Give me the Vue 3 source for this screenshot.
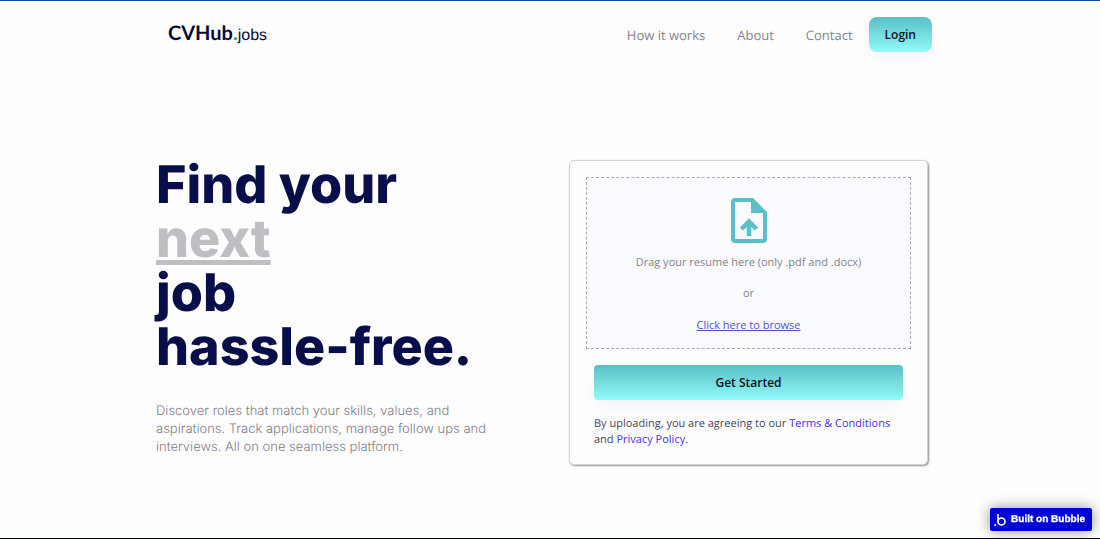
<script setup>
import { ref } from 'vue'

const navLinks = ['How it works', 'About', 'Contact']
const picker = ref(null)
</script>

<template>
  <div class="page">
    <header class="header">
      <a class="logo" href="#"><span class="logo-name">CVHub</span><span class="logo-dot">.</span><span class="logo-tld">jobs</span></a>
      <nav class="nav">
        <a v-for="link in navLinks" :key="link" class="nav-link" href="#">{{ link }}</a>
        <button class="button login" type="button">Login</button>
      </nav>
    </header>

    <main class="hero">
      <section class="intro">
        <h1 class="title">
          <span class="line">Find your</span>
          <span class="line accent">next</span>
          <span class="line">job</span>
          <span class="line">hassle-free.</span>
        </h1>
        <p class="lead">Discover roles that match your skills, values, and aspirations. Track applications, manage follow ups and interviews. All on one seamless platform.</p>
      </section>

      <section class="card">
        <div class="dropzone">
          <svg class="file-icon" viewBox="0 0 38 46" aria-hidden="true">
            <path fill="#5bbfc6" fill-rule="evenodd" d="M5 0H23L37 14V41Q37 45 33 45H5Q1 45 1 41V4Q1 0 5 0ZM5 4V41H33V15H21V4Z" />
            <path fill="none" stroke="#5bbfc6" stroke-width="4.500" d="M19 38V23M11.500 31L19 23.500L26.500 31" />
          </svg>
          <p class="drop-text">Drag your resume here (only .pdf and .docx)</p>
          <p class="drop-text">or</p>
          <button class="browse" type="button" @click="picker.click()">Click here to browse</button>
          <input ref="picker" type="file" accept=".pdf,.docx" aria-label="Resume" hidden />
        </div>
        <button class="button start" type="button">Get Started</button>
        <p class="terms">By uploading, you are agreeing to our <a href="#">Terms &amp; Conditions</a> and <a href="#">Privacy Policy</a>.</p>
      </section>
    </main>

    <a class="badge" href="#">
      <svg class="badge-icon" viewBox="0 0 12 14" aria-hidden="true">
        <path fill="none" stroke="#fff" stroke-width="1.600" d="M4 1V9" />
        <circle cx="7.500" cy="8.500" r="3.500" fill="none" stroke="#fff" stroke-width="1.600" />
        <circle cx="1.200" cy="12" r="1" fill="#fff" />
      </svg>
      Built on Bubble
    </a>
  </div>
</template>

<style>
body {
  background: #fefefe;
}
</style>

<style scoped>
.page {
  box-sizing: border-box;
  min-height: 100vh;
  padding: 0 16px;
  border-top: 1px solid #07529a;
  border-bottom: 1px solid #050524;
  font-family: "Open Sans", sans-serif;
  text-rendering: geometricPrecision;
}
a {
  text-decoration: none;
}
.header {
  display: flex;
  align-items: center;
  justify-content: space-between;
  box-sizing: border-box;
  max-width: 788px;
  margin: 0 auto;
  padding: 16px 12px;
}
.logo {
  display: flex;
  align-items: baseline;
  color: #07083a;
  line-height: 24px;
}
.logo-name {
  font: 700 20px/24px Lato, sans-serif;
}
.logo-dot {
  color: #259a9a;
  font: 700 20px/24px Lato, sans-serif;
}
.logo-tld {
  font: 400 16px/24px "Liberation Sans", sans-serif;
}
.nav {
  display: flex;
  align-items: center;
  gap: 32px;
}
.nav-link {
  color: #85838b;
  font-size: 13px;
  line-height: 20px;
}
.button {
  border: 0;
  background: linear-gradient(#5bbfc6, #91fafa);
  box-shadow: 0 8px 16px rgba(120, 80, 220, 0.06);
  color: #091520;
  font: 600 12px/19px "Open Sans", sans-serif;
  cursor: pointer;
}
.login {
  margin-left: -16px;
  padding: 8px 16px;
  border-radius: 8px;
}
.hero {
  display: grid;
  grid-template-columns: 1fr 359px;
  box-sizing: border-box;
  max-width: 788px;
  margin: 0 auto;
  padding: 92px 16px 72px 0;
}
.title {
  margin: -2px 0 0;
  color: #070e4a;
  font: 800 52px/54px Inter, sans-serif;
}
.line {
  display: block;
  width: fit-content;
}
.accent {
  color: #c0bec2;
  text-decoration: underline;
  text-decoration-thickness: 5px;
  text-underline-offset: 3px;
}
.lead {
  max-width: 336px;
  margin: 28px 0 0;
  color: #85808a;
  font: 300 13px/18px Inter, sans-serif;
}
.card {
  display: flex;
  flex-direction: column;
  align-self: start;
  padding: 16px;
  border: 1px solid #d2d1d4;
  border-radius: 5px;
  background: #fefefe;
  box-shadow: 1px 1px 2px #918e96;
}
.dropzone {
  display: flex;
  flex-direction: column;
  align-items: center;
  gap: 15px;
  padding: 20px 16px 15px;
  border: 1px dashed #a8abb8;
  background: #fafbff;
}
.file-icon {
  width: 38px;
  height: 46px;
  margin-bottom: -4px;
}
.drop-text {
  margin: 0;
  color: #85838b;
  font-size: 11px;
  line-height: 16px;
}
.browse {
  padding: 0;
  border: 0;
  background: none;
  color: #5052d8;
  font: 400 11px/16px "Open Sans", sans-serif;
  text-decoration: underline;
  cursor: pointer;
}
.start {
  margin: 16px 8px 0;
  padding: 8px;
  border-radius: 4px;
}
.terms {
  margin: 16px 8px 0;
  color: #48455f;
  font-size: 11px;
  line-height: 16px;
}
.terms a {
  color: #4a2bea;
}
.badge {
  position: fixed;
  right: 8px;
  bottom: 8px;
  display: flex;
  align-items: center;
  gap: 5px;
  padding: 4px 7px 4px 4px;
  border-radius: 2px;
  background: #0205d3;
  box-shadow: 0 0 14px rgba(0, 0, 0, 0.45);
  color: #fff;
  font: 700 10px/15px "Liberation Sans", sans-serif;
  -webkit-text-stroke: 0.3px #fff;
}
.badge-icon {
  width: 12px;
  height: 14px;
}
</style>
